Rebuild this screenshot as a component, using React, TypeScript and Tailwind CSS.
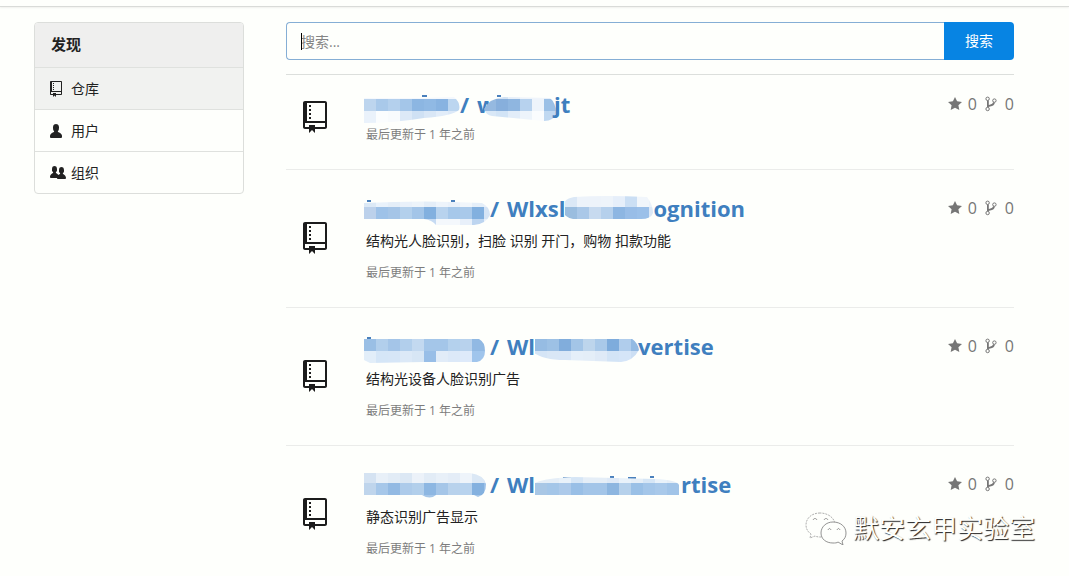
import type { ReactNode } from 'react';

type Band = { y: number; colors: string[] };
interface MosaicData { id: string; width: number; clip: string; bands: Band[]; marks?: string; overlap?: boolean; }
interface Repo { owner: MosaicData; prefix: string; hidden: MosaicData; suffix: string; description?: string; }

const ICONS = {
  repo: { w: 12, d: 'M4 9H3V8h1v1zm0-3H3v1h1V6zm0-2H3v1h1V4zm0-2H3v1h1V2zm8-1v12c0 .55-.45 1-1 1H6v2l-1.5-1.5L3 16v-2H1c-.55 0-1-.45-1-1V1c0-.55.45-1 1-1h10c.55 0 1 .45 1 1zm-1 10H1v2h2v-1h3v1h5v-2zm0-10H2v9h9V1z' },
  person: { w: 12, d: 'M12 14.002a.998.998 0 0 1-.998.998H1.001A1 1 0 0 1 0 13.999V13c0-2.633 4-4 4-4s.229-.409 0-1c-.841-.62-.944-1.59-1-4 .173-2.413 1.867-3 3-3s2.827.586 3 3c-.056 2.41-.159 3.38-1 4-.229.59 0 1 0 1s4 1.367 4 4v1.002z' },
  organization: { w: 16, d: 'M16 12.999c0 .439-.45 1-1 1H7.995c-.539 0-.994-.447-.995-.999H1c-.54 0-1-.561-1-1 0-2.634 3-4 3-4s.229-.409 0-1c-.841-.621-1.058-.59-1-3 .058-2.419 1.367-3 2.5-3s2.442.58 2.5 3c.058 2.41-.159 2.379-1 3-.229.59 0 1 0 1s1.549.711 2.42 2.088C9.196 9.369 10 8.999 10 8.999s.229-.409 0-1c-.841-.62-1.058-.59-1-3 .058-2.419 1.367-3 2.5-3s2.437.581 2.495 3c.059 2.41-.158 2.38-1 3-.229.59 0 1 0 1s3.005 1.366 3.005 4z' },
  star: { w: 14, d: 'M14 6l-4.9-.64L7 1 4.9 5.36 0 6l3.6 3.26L2.67 14 7 11.67 11.33 14l-.93-4.74L14 6z' },
};

function Octicon({ name, className }: { name: keyof typeof ICONS; className: string }) {
  const icon = ICONS[name];
  return (
    <svg viewBox={`0 0 ${icon.w} 16`} className={className} fill="currentColor" aria-hidden="true">
      <path d={icon.d} />
    </svg>
  );
}

function BranchIcon({ className }: { className: string }) {
  return (
    <svg viewBox="0 0 12 16" className={className} fill="none" stroke="currentColor" aria-hidden="true">
      <circle cx="2.6" cy="2.8" r="1.7" />
      <circle cx="2.6" cy="13" r="1.7" />
      <circle cx="9.4" cy="4.6" r="1.7" />
      <path d="M2.9 4.6v6.6M3 10.4c.6-1.4 5.6.2 6-4" strokeWidth="1.8" />
    </svg>
  );
}

// Redacted part of a name: 12px colour cells cut to a brush-like outline.
function Mosaic({ data }: { data: MosaicData }) {
  return (
    <svg
      width={data.width}
      height={36}
      viewBox={`0 0 ${data.width} 36`}
      className={`shrink-0 overflow-visible ${data.overlap ? '-ml-3' : ''}`}
      aria-hidden="true"
    >
      <clipPath id={data.id}><path d={data.clip} /></clipPath>
      {data.marks && <path d={data.marks} stroke="#4a80bc" strokeWidth="2" fill="none" />}
      <g clipPath={`url(#${data.id})`} shapeRendering="crispEdges">
        {data.bands.map((b) => b.colors.map((c, i) => (
          <rect key={`${b.y}-${i}`} x={i * 12} y={b.y} width={12} height={12} fill={c} />
        )))}
      </g>
    </svg>
  );
}

const REPOS: Repo[] = [
  {
    owner: {
      id: 'm1', width: 96, clip: 'M0 11Q40 12 90 10Q97 16 95 23Q88 29 60 31Q30 36 0 36Z', marks: 'M58 9h5',
      bands: [
        { y: 0, colors: ['#f4f8fd', '#f4f8fd', '#f4f8fd', '#f4f8fd', '#f4f8fd', '#f4f8fd', '#f4f8fd', '#f4f8fd'] },
        { y: 12, colors: ['#bdd5ee', '#a9c9ea', '#b4d0ed', '#a4c6e9', '#8cb6e2', '#90b9e4', '#88b3e1', '#bcd6f0'] },
        { y: 24, colors: ['#eaf2fb', '#fbfdfe', '#f8fbfd', '#dce9f7', '#cfe1f4', '#d9e7f6', '#e2edf9', '#dce9f8'] },
      ],
    },
    prefix: 'w',
    hidden: {
      id: 'm2', width: 70, overlap: true, clip: 'M0 22Q6 11 20 10L66 11Q72 16 72 26Q70 34 60 34L8 29Q2 28 0 22Z', marks: 'M13 9h4',
      bands: [
        { y: 0, colors: ['#d2e2f3', '#d2e2f3', '#e6eff9', '#eef4fb', '#f0f5fb', '#e8f0fa', '#dce9f6'] },
        { y: 12, colors: ['#95b9e0', '#87afdc', '#8fb6e0', '#b7d2ee', '#eef4fb', '#9bc0e6', '#8bb3df'] },
        { y: 24, colors: ['#d9e8f7', '#d2e4f6', '#e2edf9', '#edf4fb', '#fafcfe', '#c0d8f1', '#b0cdec'] },
      ],
    },
    suffix: 'jt',
  },
  {
    owner: {
      id: 'm3', width: 126, clip: 'M0 12Q60 9 118 12Q126 16 126 24Q122 33 110 34L72 34Q68 29 60 28L0 28Z', marks: 'M3 10h4M87 10h4',
      bands: [
        { y: 4, colors: ['#dce9f6', '#e9f2fb', '#e4eef8', '#e9f1fa', '#edf4fa', '#e4eef8', '#edf4fb', '#e9f1fa', '#f1f6fb', '#e5eff9', '#e9f1fb'] },
        { y: 16, colors: ['#bcd1eb', '#9ec2e8', '#a5c5e7', '#b3d0ec', '#a3c5e8', '#82b0df', '#b8d3ee', '#a6c8ea', '#a9c9ea', '#82b0df', '#d5e4f5'] },
        { y: 28, colors: ['#eef4fb', '#eef4fb', '#eef4fb', '#eef4fb', '#eef4fb', '#c6dbf3', '#f4f8fc', '#f4f8fc', '#e8f0fa', '#bdd5f0', '#e9f1fb'] },
      ],
    },
    prefix: 'Wlxsl',
    hidden: {
      id: 'm4', width: 88, clip: 'M-3 19Q-3 8 9 6Q40 4 82 6Q88 14 88 22Q86 28 76 28L8 28Q0 27 -3 19Z',
      bands: [
        { y: 4, colors: ['#dbe8f6', '#edf3fa', '#edf3fa', '#eef4fa', '#e6effa', '#cbdff4', '#f1f6fb', '#eaf2fa'] },
        { y: 16, colors: ['#9abddf', '#aac8e8', '#c7daef', '#b5d0ec', '#8db6e2', '#98bde7', '#9bc0e9', '#dce8f6'] },
      ],
    },
    suffix: 'ognition',
    description: '结构光人脸识别，扫脸 识别 开门，购物 扣款功能',
  },
  {
    owner: {
      id: 'm5', width: 126, clip: 'M0 10L115 10Q121 13 121 22Q121 31 113 33L60 33L6 34L0 31Z', marks: 'M3 9h4',
      bands: [
        { y: 10, colors: ['#9abfe5', '#b2cfec', '#a4c5e8', '#b2cfec', '#c3d9f0', '#a4c6e9', '#a4c6e9', '#b4d1ed', '#b8d2ed', '#91b9e3', '#94bbe4'] },
        { y: 22, colors: ['#e2eef9', '#d5e6f7', '#d6e6f7', '#dce9f7', '#d7e6f5', '#98bee7', '#e1ecf8', '#dce9f8', '#deeafa', '#a0c5ec', '#a0c5ec'] },
      ],
    },
    prefix: 'Wl',
    hidden: {
      id: 'm6', width: 103, clip: 'M-2 9L96 9Q103 14 104 21Q98 32 86 33L30 31Q8 31 -2 23Z',
      bands: [
        { y: 10, colors: ['#96bce3', '#9dc1e5', '#81addc', '#a3c5e7', '#bdd5ec', '#a9c9e9', '#7eacdc', '#b0cdec', '#93bae3'] },
        { y: 22, colors: ['#d5e5f6', '#d9e7f6', '#d9e7f7', '#e5eff9', '#e4eef8', '#dfeaf7', '#d3e4f6', '#d5e5f8', '#ccdff4'] },
      ],
    },
    suffix: 'vertise',
    description: '结构光设备人脸识别广告',
  },
  {
    owner: {
      id: 'm7', width: 126, clip: 'M0 6L106 6Q120 8 122 17Q122 28 114 30L110 28L72 28Q66 33 58 28L0 28Z',
      bands: [
        { y: 4, colors: ['#d5e3f2', '#e8f0f8', '#e2ecf6', '#dce8f4', '#ecf2f9', '#e2ecf6', '#e8f0f8', '#e4edf7', '#eef4fa', '#dbe8f5', '#d5e4f5'] },
        { y: 16, colors: ['#bfd5ec', '#a6c7e9', '#93bae3', '#adcbea', '#b2cfeb', '#8db7e2', '#a5c6e8', '#b8d2ec', '#b8d3ee', '#84b1df', '#9cc1e8'] },
        { y: 28, colors: ['#a5c6e8', '#a5c6e8', '#a5c6e8', '#a5c6e8', '#a5c6e8', '#a5c6e8', '#a5c6e8', '#a5c6e8', '#a5c6e8', '#a5c6e8', '#a5c6e8'] },
      ],
    },
    prefix: 'Wl',
    hidden: {
      id: 'm8', width: 146, clip: 'M0 16Q10 11 40 10L120 12Q142 13 144 18L144 28L0 28Z', marks: 'M28 11h8M75 10h4M93 11h8M115 10h4',
      bands: [
        { y: 4, colors: ['#e5eef7', '#e5eef7', '#e9f2fa', '#d6e6f6', '#e5eef7', '#e5eef7', '#dfeaf7', '#e9f2fa', '#e5eef7', '#d6e6f6', '#e9f2fa', '#e5eef7'] },
        { y: 16, colors: ['#a9c7e5', '#a4c6e8', '#adcaea', '#99bfe6', '#a3c5e8', '#a3c5e8', '#8db6e0', '#b6d1eb', '#9ac0e6', '#a4c6e9', '#a9c9ea', '#a1c4e8'] },
      ],
    },
    suffix: 'rtise',
    description: '静态识别广告显示',
  },
];

function MenuItem({ icon, active, children }: { icon: ReactNode; active?: boolean; children: ReactNode }) {
  return (
    <a
      href="#"
      aria-current={active ? 'page' : undefined}
      className={`flex h-[42px] items-center border-t border-[#dfe1de] pl-[15px] text-sm text-[#222] ${active ? 'bg-[#f1f2f0]' : ''}`}
    >
      <span className="w-[21px] shrink-0">{icon}</span>
      {children}
    </a>
  );
}

function RepoItem({ repo, first }: { repo: Repo; first: boolean }) {
  return (
    <li className={`flex items-center pb-[26px] ${first ? 'pt-4' : 'border-t border-[#ebecea] pt-[25px]'}`}>
      <Octicon name="repo" className="ml-[17px] h-8 w-6 shrink-0 text-[#1c1c1c]" />
      <div className="ml-[37px] min-w-0 flex-1 self-start">
        <div className="flex h-7 items-center">
          <h2 className="text-[22px] leading-7 font-bold text-[#3f7fbf]">
            <a href="#" className="flex items-center">
              <Mosaic data={repo.owner} />
              <span className="mr-2 pb-0.5">/</span>
              <span className="pb-0.5">{repo.prefix}</span>
              <Mosaic data={repo.hidden} />
              <span className="relative pb-0.5">{repo.suffix}</span>
            </a>
          </h2>
          <div className="mb-0.5 ml-auto flex items-center text-base leading-5 text-[#767676]">
            <Octicon name="star" className="h-4 w-3.5" />
            <span className="ml-1.5">0</span>
            <BranchIcon className="ml-2 h-4 w-3" />
            <span className="ml-2">0</span>
          </div>
        </div>
        {repo.description && <p className="mt-2 mb-3.5 pl-0.5 text-sm leading-5 text-[#222]">{repo.description}</p>}
        <p className="mt-2 pl-0.5 text-xs leading-4 text-[#7d7d7d]">最后更新于 1 年之前</p>
      </div>
    </li>
  );
}

export default function App() {
  return (
    <div className="relative min-h-screen bg-[#fefffc] font-['Open_Sans','Noto_Sans_CJK_SC',sans-serif]">
      <div className="h-[7px] border-b border-[#d9dbd8] shadow-[0_1px_2px_#f0f1ee]" />
      <div className="flex items-start gap-[42px] pt-[15px] pr-[55px] pl-[34px]">
        <nav className="w-[210px] shrink-0 overflow-hidden rounded border border-[#dcdedb]">
          <h1 className="flex h-11 items-center bg-[#efefee] pb-0.5 pl-4 text-[15px] font-bold text-[#222]">发现</h1>
          <MenuItem active icon={<Octicon name="repo" className="h-4 w-3" />}>仓库</MenuItem>
          <MenuItem icon={<Octicon name="person" className="h-4 w-3" />}>用户</MenuItem>
          <MenuItem icon={<Octicon name="organization" className="h-4 w-4" />}>组织</MenuItem>
        </nav>
        <main className="min-w-0 flex-1">
          <form className="flex" onSubmit={(e) => e.preventDefault()}>
            <div className="relative flex-1">
              <input
                aria-label="搜索"
                placeholder="搜索..."
                className="h-[38px] w-full rounded-l border border-r-0 border-[#85aed5] bg-[#fefffc] px-3.5 text-sm outline-none placeholder:text-[#858585]"
              />
              <span className="absolute top-[11px] left-[15px] h-[17px] w-px bg-black" />
            </div>
            <button type="submit" className="h-[38px] w-[70px] rounded-r bg-[#0784e3] text-sm text-white">搜索</button>
          </form>
          <hr className="mt-3.5 border-[#dcdfdc]" />
          <ul>
            {REPOS.map((repo, i) => <RepoItem key={repo.owner.id} repo={repo} first={i === 0} />)}
          </ul>
        </main>
      </div>
      {/* account watermark over the page */}
      <div className="absolute top-[510px] right-[34px] flex items-center gap-1.5">
        <svg viewBox="0 0 42 34" className="h-[34px] w-[42px]" fill="#fefffc" stroke="#777" strokeWidth="0.8" aria-hidden="true">
          <path d="M15 2C7 2 1 7 1 14c0 4 2 7 5 9l-1 4 5-2c2 1 4 1 6 1 8 0 14-5 14-12S23 2 15 2z" strokeDasharray="2 1" stroke="#999" />
          <path d="M28 11c-7 0-12 5-12 11s5 10 12 10c2 0 4 0 5-1l5 3-1-4c3-2 4-5 4-8 0-6-5-11-13-11z" />
          <path d="M8 9c1-2 3-2 4 0M19 9c1-2 3-2 4 0M23 19c1-2 2-2 3 0M32 19c1-2 2-2 3 0" fill="none" />
        </svg>
        <span className="text-[26px] leading-9 text-[#fefffc] [text-shadow:1px_1px_1px_#222]">默安玄甲实验室</span>
      </div>
    </div>
  );
}
